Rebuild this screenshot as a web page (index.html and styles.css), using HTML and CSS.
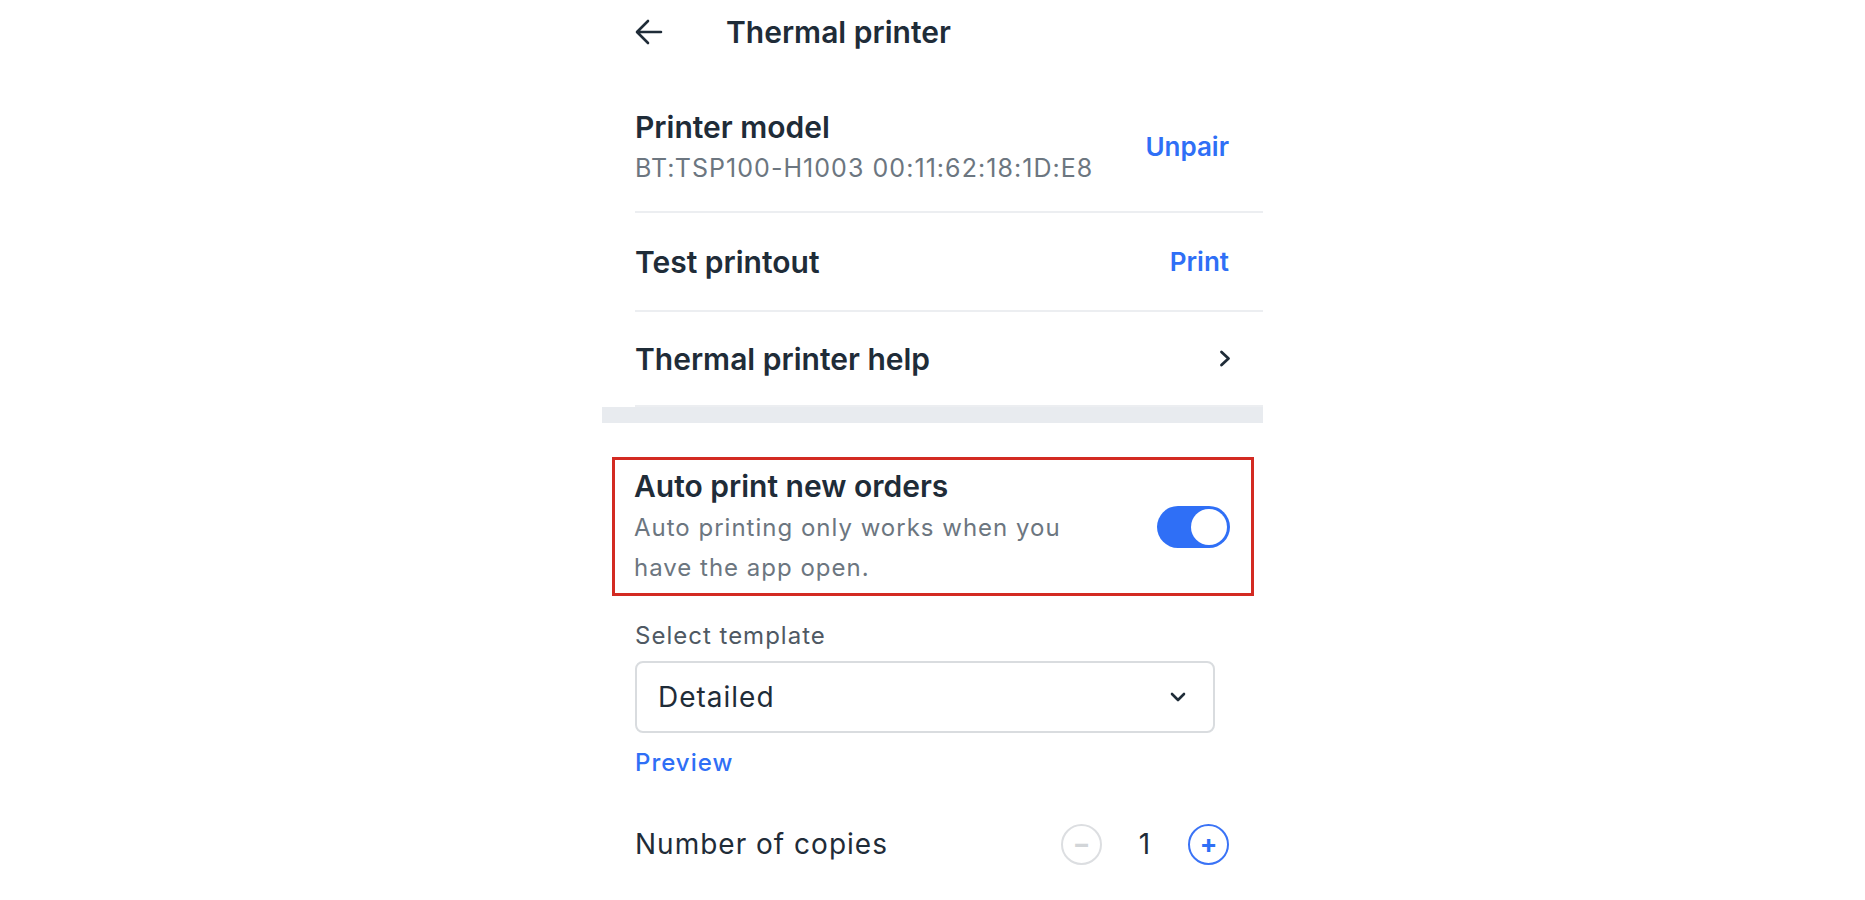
FILE: index.html
```html
<!DOCTYPE html>
<html lang="en">
<head>
    <meta charset="UTF-8">
    <meta name="viewport" content="width=device-width, initial-scale=1.0">
    <title>Thermal printer</title>
    <link rel="stylesheet" href="styles.css">
</head>
<body>

    <div class="screen">
        <div class="header">
            <svg class="back" width="28" height="26" viewBox="0 0 28 26">
                <path d="M26 13H3M13 2L2 13l11 11" fill="none" stroke="#1f2c38" stroke-width="2.6" stroke-linecap="round" stroke-linejoin="round"/>
            </svg>
            <h1>Thermal printer</h1>
        </div>

        <div class="list">
            <div class="row model">
                <div>
                    <div class="row-title">Printer model</div>
                    <div class="row-sub">BT:TSP100-H1003 00:11:62:18:1D:E8</div>
                </div>
                <a class="action">Unpair</a>
            </div>
            <div class="row">
                <div class="row-title">Test printout</div>
                <a class="action">Print</a>
            </div>
            <div class="row">
                <div class="row-title">Thermal printer help</div>
                <svg width="12" height="17" viewBox="0 0 12 17">
                    <path d="M2.5 2l7 6.5-7 6.5" fill="none" stroke="#1f2c38" stroke-width="2.8" stroke-linecap="round" stroke-linejoin="round"/>
                </svg>
            </div>
        </div>

        <div class="divider"></div>

        <div class="auto-print">
            <div class="auto-text">
                <div class="row-title">Auto print new orders</div>
                <div class="auto-sub">Auto printing only works when you have the app open.</div>
            </div>
            <div class="toggle on"><span class="knob"></span></div>
        </div>

        <div class="settings">
            <div class="label">Select template</div>
            <div class="select">
                <span>Detailed</span>
                <svg width="16" height="10" viewBox="0 0 16 10">
                    <path d="M2 2l6 6 6-6" fill="none" stroke="#1f2c38" stroke-width="2.6" stroke-linecap="round" stroke-linejoin="round"/>
                </svg>
            </div>
            <a class="preview">Preview</a>

            <div class="copies">
                <span>Number of copies</span>
                <div class="stepper">
                    <button class="step minus" disabled>&minus;</button>
                    <span class="count">1</span>
                    <button class="step plus">+</button>
                </div>
            </div>
        </div>
    </div>

</body>
</html>
```

FILE: styles.css
```css
body {
    margin: 0;
    background-color: #ffffff;
    font-family: Inter, 'Noto Sans', sans-serif;
    color: #1f2c38;
}

.screen {
    width: 661px;
    margin: 0 auto;
}

.header {
    display: flex;
    align-items: center;
    height: 64px;
    padding-left: 33px;
}

.back {
    margin-right: 63px;
}

.header h1 {
    margin: 0;
    font-size: 30px;
    font-weight: 600;
    line-height: 64px;
}

.list {
    margin-top: 16px;
    margin-left: 33px;
}

.row {
    display: flex;
    align-items: center;
    justify-content: space-between;
    min-height: 97px;
    padding-right: 34px;
    border-bottom: 2px solid #eceef1;
}

.row.model {
    min-height: 0;
    padding-top: 27px;
    padding-bottom: 25px;
}

.row:last-child {
    min-height: 93px;
    padding-right: 32px;
}

.row-title {
    font-size: 30px;
    font-weight: 600;
    line-height: 40px;
}

.row-sub {
    margin-top: 3px;
    font-size: 25px;
    line-height: 36px;
    letter-spacing: 1.05px;
    color: #6c7680;
}

.action {
    font-size: 26px;
    font-weight: 600;
    color: #2f6ff6;
    cursor: pointer;
}

.divider {
    height: 16px;
    background-color: #e8ebef;
}

.auto-print {
    display: flex;
    align-items: center;
    justify-content: space-between;
    margin: 34px 9px 0 10px;
    padding: 6px 21px 5px 19px;
    border: 3px solid #d32a22;
}

.auto-text {
    max-width: 480px;
}

.auto-text .row-title {
    margin-bottom: 2px;
}

.auto-sub {
    font-size: 24px;
    line-height: 40px;
    letter-spacing: 1px;
    color: #6c7680;
}

.toggle {
    position: relative;
    width: 73px;
    height: 42px;
    border-radius: 21px;
    background-color: #2f6ff6;
}

.toggle .knob {
    position: absolute;
    top: 3px;
    right: 3px;
    width: 36px;
    height: 36px;
    border-radius: 50%;
    background-color: #ffffff;
}

.settings {
    padding: 0 34px 0 33px;
}

.label {
    margin-top: 24px;
    font-size: 24px;
    line-height: 32px;
    letter-spacing: 1px;
    color: #4f5963;
}

.select {
    display: flex;
    align-items: center;
    justify-content: space-between;
    box-sizing: border-box;
    width: 580px;
    height: 72px;
    margin-top: 9px;
    padding: 0 27px 0 21px;
    border: 2px solid #d9dcdf;
    border-radius: 8px;
    font-size: 28px;
    letter-spacing: 1px;
}

.preview {
    display: block;
    margin-top: 14px;
    font-size: 24px;
    font-weight: 500;
    line-height: 32px;
    letter-spacing: 1px;
    color: #2f6ff6;
    cursor: pointer;
}

.copies {
    display: flex;
    align-items: center;
    justify-content: space-between;
    height: 44px;
    margin-top: 43px;
    font-size: 28px;
    letter-spacing: 1px;
}

.stepper {
    display: flex;
    align-items: center;
}

.count {
    width: 86px;
    text-align: center;
    font-size: 28px;
}

.step {
    display: flex;
    align-items: center;
    justify-content: center;
    width: 41px;
    height: 41px;
    padding: 0;
    border-radius: 50%;
    background-color: #ffffff;
    font-family: Inter, sans-serif;
    font-size: 26px;
    font-weight: 700;
    line-height: 1;
    cursor: pointer;
}

.step.minus {
    border: 2px solid #dcdee1;
    color: #d2d5d8;
}

.step.plus {
    border: 2px solid #3a73f6;
    color: #2f6ff6;
}
```
